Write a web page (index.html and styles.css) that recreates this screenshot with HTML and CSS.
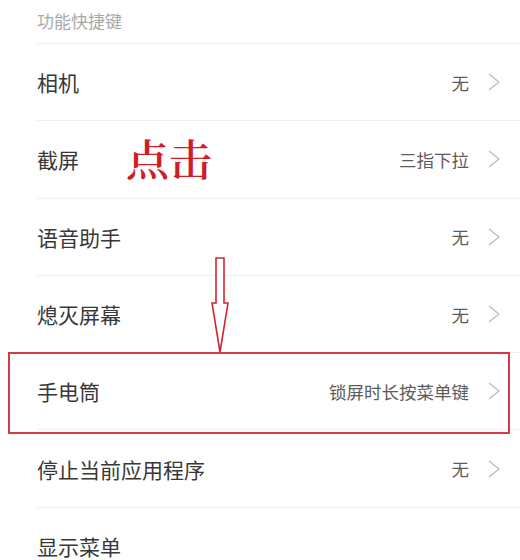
FILE: index.html
```html
<!DOCTYPE html>
<html lang="zh-CN">

<head>
    <meta charset="UTF-8">
    <title>功能快捷键</title>
    <link rel="stylesheet" href="styles.css">
</head>

<body>
    <p class="gruppe">功能快捷键</p>

    <ul class="liste">
        <li class="punkt"><span class="navn">相机</span><span class="vaerdi">无</span><svg class="pil" width="12" height="18" viewBox="0 0 12 18"><polyline points="1,1 11,9 1,17" /></svg></li>
        <li class="punkt"><span class="navn">截屏</span><span class="vaerdi">三指下拉</span><svg class="pil" width="12" height="18" viewBox="0 0 12 18"><polyline points="1,1 11,9 1,17" /></svg></li>
        <li class="punkt"><span class="navn">语音助手</span><span class="vaerdi">无</span><svg class="pil" width="12" height="18" viewBox="0 0 12 18"><polyline points="1,1 11,9 1,17" /></svg></li>
        <li class="punkt"><span class="navn">熄灭屏幕</span><span class="vaerdi">无</span><svg class="pil" width="12" height="18" viewBox="0 0 12 18"><polyline points="1,1 11,9 1,17" /></svg></li>
        <li class="punkt"><span class="navn">手电筒</span><span class="vaerdi">锁屏时长按菜单键</span><svg class="pil" width="12" height="18" viewBox="0 0 12 18"><polyline points="1,1 11,9 1,17" /></svg></li>
        <li class="punkt"><span class="navn">停止当前应用程序</span><span class="vaerdi">无</span><svg class="pil" width="12" height="18" viewBox="0 0 12 18"><polyline points="1,1 11,9 1,17" /></svg></li>
        <li class="punkt"><span class="navn">显示菜单</span></li>
    </ul>

    <!-- markering oven på skærmbilledet -->
    <p class="klik">点击</p>
    <svg class="nedpil" width="24" height="100" viewBox="0 0 24 100">
        <path d="M6 1 H14 V46 H18 L10 95 L2 46 H6 Z" fill="#fff" stroke="#d4262e" stroke-width="1.6" stroke-linejoin="miter"/>
    </svg>
    <div class="ramme"></div>
</body>

</html>
```

FILE: styles.css
```css
body {
    margin: 0;
    background: #fff;
    font-family: "Noto Sans CJK SC", "Noto Sans", sans-serif;
    position: relative;
    height: 560px;
    overflow: hidden;
}

.gruppe {
    margin: 0 0 0 37px;
    height: 44px;
    line-height: 42px;
    font-size: 17px;
    color: #a8a8a8;
    border-bottom: 1px solid #efefef;
    box-sizing: border-box;
}

.liste {
    list-style: none;
    margin: 0;
    padding: 0;
}

.punkt {
    display: flex;
    align-items: center;
    height: 77.3px;
    margin-left: 37px;
    padding-right: 20px;
    border-bottom: 1px solid #efefef;
    box-sizing: border-box;
}

.navn {
    flex: 1;
    font-size: 21px;
    color: #383838;
}

.vaerdi {
    font-size: 17.5px;
    color: #5c5c5c;
}

.pil {
    margin-left: 19px;
    fill: none;
    stroke: #bdbdbd;
    stroke-width: 1.4;
}

.klik {
    position: absolute;
    left: 126px;
    top: 133px;
    margin: 0;
    font-family: "Noto Serif CJK SC", serif;
    font-size: 43px;
    font-weight: 600;
    line-height: 50px;
    color: #d11d26;
}

.nedpil {
    position: absolute;
    left: 210px;
    top: 257px;
}

.ramme {
    position: absolute;
    left: 8px;
    top: 352px;
    width: 502px;
    height: 82px;
    border: 2px solid #d23a45;
    box-sizing: border-box;
}
```
